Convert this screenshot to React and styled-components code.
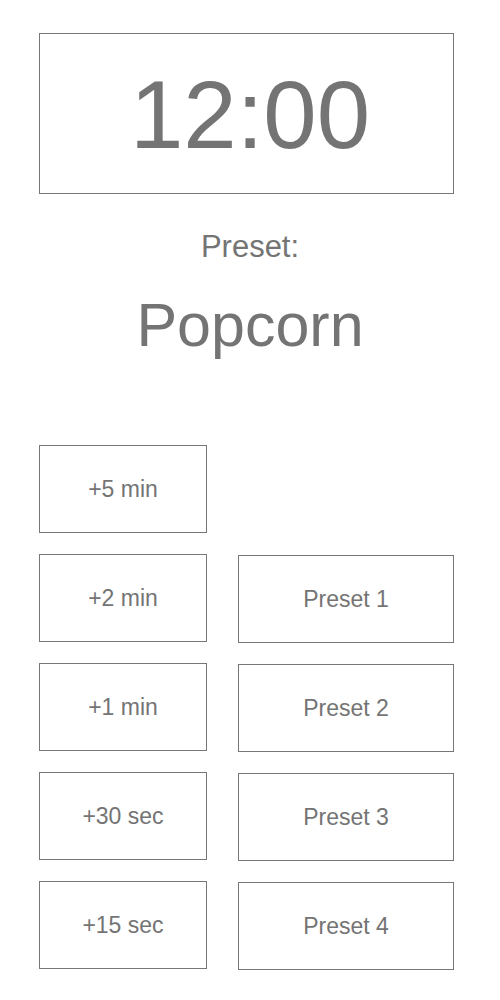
import React from 'react'
import styled, { createGlobalStyle } from 'styled-components'

const GlobalStyle = createGlobalStyle`
html, body {
margin:0;
padding:0;
background-color:#fff;
}
body{
font-family:"Liberation Sans", Arial, Helvetica, sans-serif;
color:#747474;
}
`

const Page = styled.main`
width:500px;
padding-top:33px;
box-sizing:border-box;
`

const TimerBox = styled.div`
margin-left:39px;
width:415px;
height:161px;
box-sizing:border-box;
border:1px solid #777;
display:flex;
align-items:center;
justify-content:center;
padding-left:7px;
padding-top:2px;
font-size:96px;
line-height:1;
`

const PresetLabel = styled.div`
margin-top:35px;
text-align:center;
font-size:31px;
line-height:36px;
`

const PresetName = styled.div`
margin-top:25px;
text-align:center;
font-size:61px;
line-height:70px;
`

const Controls = styled.div`
margin-top:85px;
margin-left:39px;
display:flex;
gap:31px;
`

const Column = styled.div`
display:flex;
flex-direction:column;
gap:21px;
width:${p => p.$width}px;
padding-top:${p => p.$offset || 0}px;
`

const Button = styled.button`
height:88px;
box-sizing:border-box;
border:1px solid #777;
background:#fff;
border-radius:0;
font-family:"Liberation Sans", Arial, sans-serif;
font-size:23px;
color:#747474;
padding:0;
cursor:pointer;
`

const addButtons = ['+5 min', '+2 min', '+1 min', '+30 sec', '+15 sec']
const presetButtons = ['Preset 1', 'Preset 2', 'Preset 3', 'Preset 4']

const App = () => {
    return (
        <Page>
            <GlobalStyle />
            <TimerBox>12:00</TimerBox>
            <PresetLabel>Preset:</PresetLabel>
            <PresetName>Popcorn</PresetName>
            <Controls>
                <Column $width={168}>
                    {addButtons.map((label) => (
                        <Button key={label}>{label}</Button>
                    ))}
                </Column>
                <Column $width={216} $offset={110}>
                    {presetButtons.map((label) => (
                        <Button key={label}>{label}</Button>
                    ))}
                </Column>
            </Controls>
        </Page>
    )
}

export default App
